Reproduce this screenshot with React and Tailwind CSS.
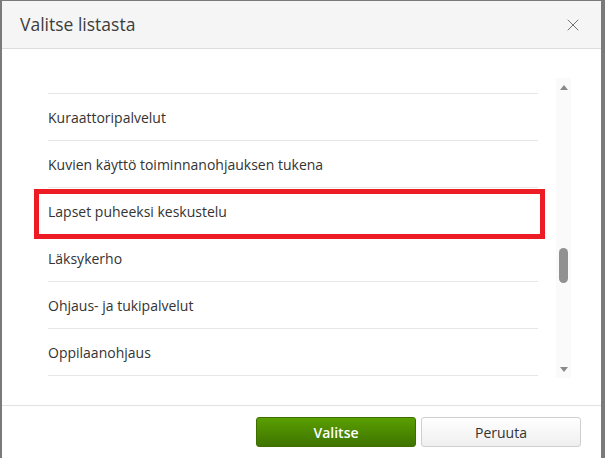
import { X } from "lucide-react";

const items = [
  "Kuraattoripalvelut",
  "Kuvien käyttö toiminnanohjauksen tukena",
  "Lapset puheeksi keskustelu",
  "Läksykerho",
  "Ohjaus- ja tukipalvelut",
  "Oppilaanohjaus",
];

export default function App() {
  return (
    <div className="h-[458px] w-[605px] overflow-hidden bg-[#7a7a7a] pl-[2px] pt-[1px] font-['Open_Sans',sans-serif] text-[#333]">
      <div className="relative w-[599px] bg-white">
        <div className="flex h-[48px] items-center justify-between border-b border-[#dcdcdc] bg-[#f5f5f5] pl-[18px] pr-[18px]">
          <h2 className="text-[17.5px] text-[#3d3d3d]">Valitse listasta</h2>
          <X className="h-[20px] w-[20px] text-[#666]" strokeWidth={1.1} />
        </div>

        <div className="relative h-[356px] overflow-hidden">
          <ul className="ml-[46px] w-[490px] pt-[44px]">
            {items.map((name) => (
              <li
                key={name}
                className="flex h-[47px] items-center border-t border-[#e6e6e6] text-[14px]"
              >
                {name}
              </li>
            ))}
            <li className="h-[47px] border-t border-[#e6e6e6]" />
          </ul>

          <div className="absolute left-[554px] top-[29px] h-[300px] w-[15px] bg-[#fafafa]">
            <div className="mx-auto mt-[7px] h-0 w-0 border-x-[4px] border-b-[5px] border-x-transparent border-b-[#8a8a8a]" />
            <div className="ml-[3px] mt-[158px] h-[35px] w-[9px] rounded-full bg-[#919191]" />
            <div className="mx-auto mt-[84px] h-0 w-0 border-x-[4px] border-t-[5px] border-x-transparent border-t-[#8a8a8a]" />
          </div>
        </div>

        <div className="flex h-[54px] justify-end gap-[5px] border-t border-[#e2e2e2] pr-[20px] pt-[11px]">
          <button className="h-[30px] w-[160px] rounded-[3px] border border-[#3d6e00] bg-gradient-to-b from-[#5a9f00] to-[#3f7400] text-[14px] font-semibold text-white">
            Valitse
          </button>
          <button className="h-[30px] w-[160px] rounded-[3px] border border-[#cfcfcf] bg-gradient-to-b from-white to-[#efefef] text-[14px] text-[#333]">
            Peruuta
          </button>
        </div>

        <div className="absolute left-[32px] top-[188px] h-[50px] w-[511px] border-[5px] border-[#ed1c24]" />
      </div>
    </div>
  );
}
